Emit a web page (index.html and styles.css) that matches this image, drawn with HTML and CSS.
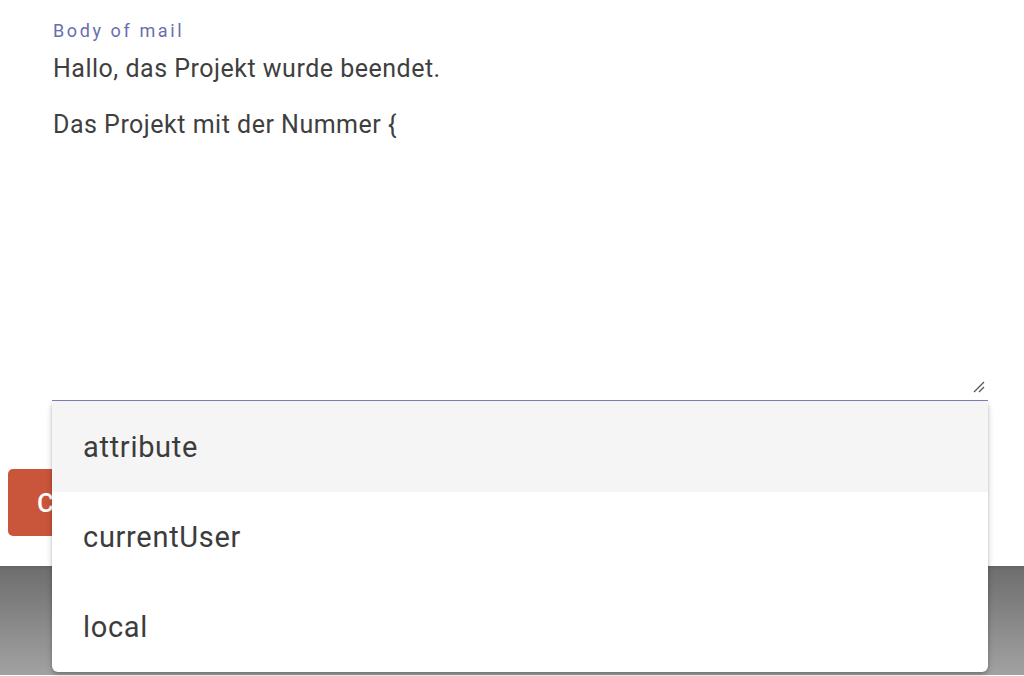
FILE: index.html
```html
<!DOCTYPE html>
<html lang="de">
<head>
<meta charset="utf-8">
<link rel="stylesheet" href="styles.css">
</head>
<body>
<div class="page">
  <div class="card">
    <div class="field">
      <div class="label">Body of mail</div>
      <div class="editor">
        <p class="line">Hallo, das Projekt wurde beendet.</p>
        <p class="line">Das Projekt mit der Nummer {</p>
        <svg class="resize" width="14" height="14" viewBox="0 0 14 14"><path d="M2 12 L12 2 M7 12 L12 7" stroke="#555" stroke-width="1.3" fill="none"/></svg>
      </div>
    </div>
    <div class="actions">
      <button class="btn">Confirm</button>
    </div>
  </div>
  <div class="footer"></div>
  <ul class="menu">
    <li class="item active">attribute</li>
    <li class="item">currentUser</li>
    <li class="item">local</li>
  </ul>
</div>
</body>
</html>
```
FILE: styles.css
```css
html, body {
  margin: 0;
  padding: 0;
  background: #fff;
}
.page {
  position: relative;
  width: 1024px;
  height: 676px;
  overflow: hidden;
  font-family: Roboto, "Liberation Sans", sans-serif;
}
.card {
  position: relative;
  z-index: 1;
  background: #fff;
  box-shadow: 0 1px 4px rgba(0,0,0,0.12);
}
.field {
  padding: 20px 36px 0 52px;
}
.label {
  font-size: 18px;
  line-height: 22px;
  letter-spacing: 2.6px;
  color: #6a6eb0;
  padding-left: 1px;
}
.editor {
  position: relative;
  height: 347px;
  padding-top: 11px;
  border-bottom: 1.5px solid #7b80b6;
  padding-left: 1px;
}
.line {
  margin: 0 0 24px;
  font-size: 25px;
  letter-spacing: 0.5px;
  line-height: 32px;
  color: #3f3f3f;
}
.resize {
  position: absolute;
  right: 2px;
  bottom: 6px;
}
.actions {
  padding: 68px 0 0 8px;
  height: 165px;
  box-sizing: border-box;
}
.btn {
  display: block;
  width: 120px;
  height: 67px;
  border: none;
  border-radius: 5px;
  background: #c9553a;
  color: #fff;
  font-family: Roboto, "Liberation Sans", sans-serif;
  font-size: 26px;
  font-weight: 500;
  text-align: left;
  padding-left: 29px;
}
.footer {
  height: 109px;
  background: linear-gradient(#6d6d6d, #a2a2a2);
}
.menu {
  position: absolute;
  z-index: 2;
  top: 402px;
  left: 52px;
  width: 936px;
  margin: 0;
  padding: 0;
  list-style: none;
  background: #fff;
  border-radius: 0 0 6px 6px;
  box-shadow: 0 3px 6px rgba(0,0,0,0.2), 0 1px 3px rgba(0,0,0,0.15);
  overflow: hidden;
}
.item {
  height: 90px;
  line-height: 90px;
  padding-left: 31px;
  font-size: 29px;
  letter-spacing: 0.7px;
  color: #3c3c3c;
}
.item.active {
  background: #f5f5f5;
}
```
